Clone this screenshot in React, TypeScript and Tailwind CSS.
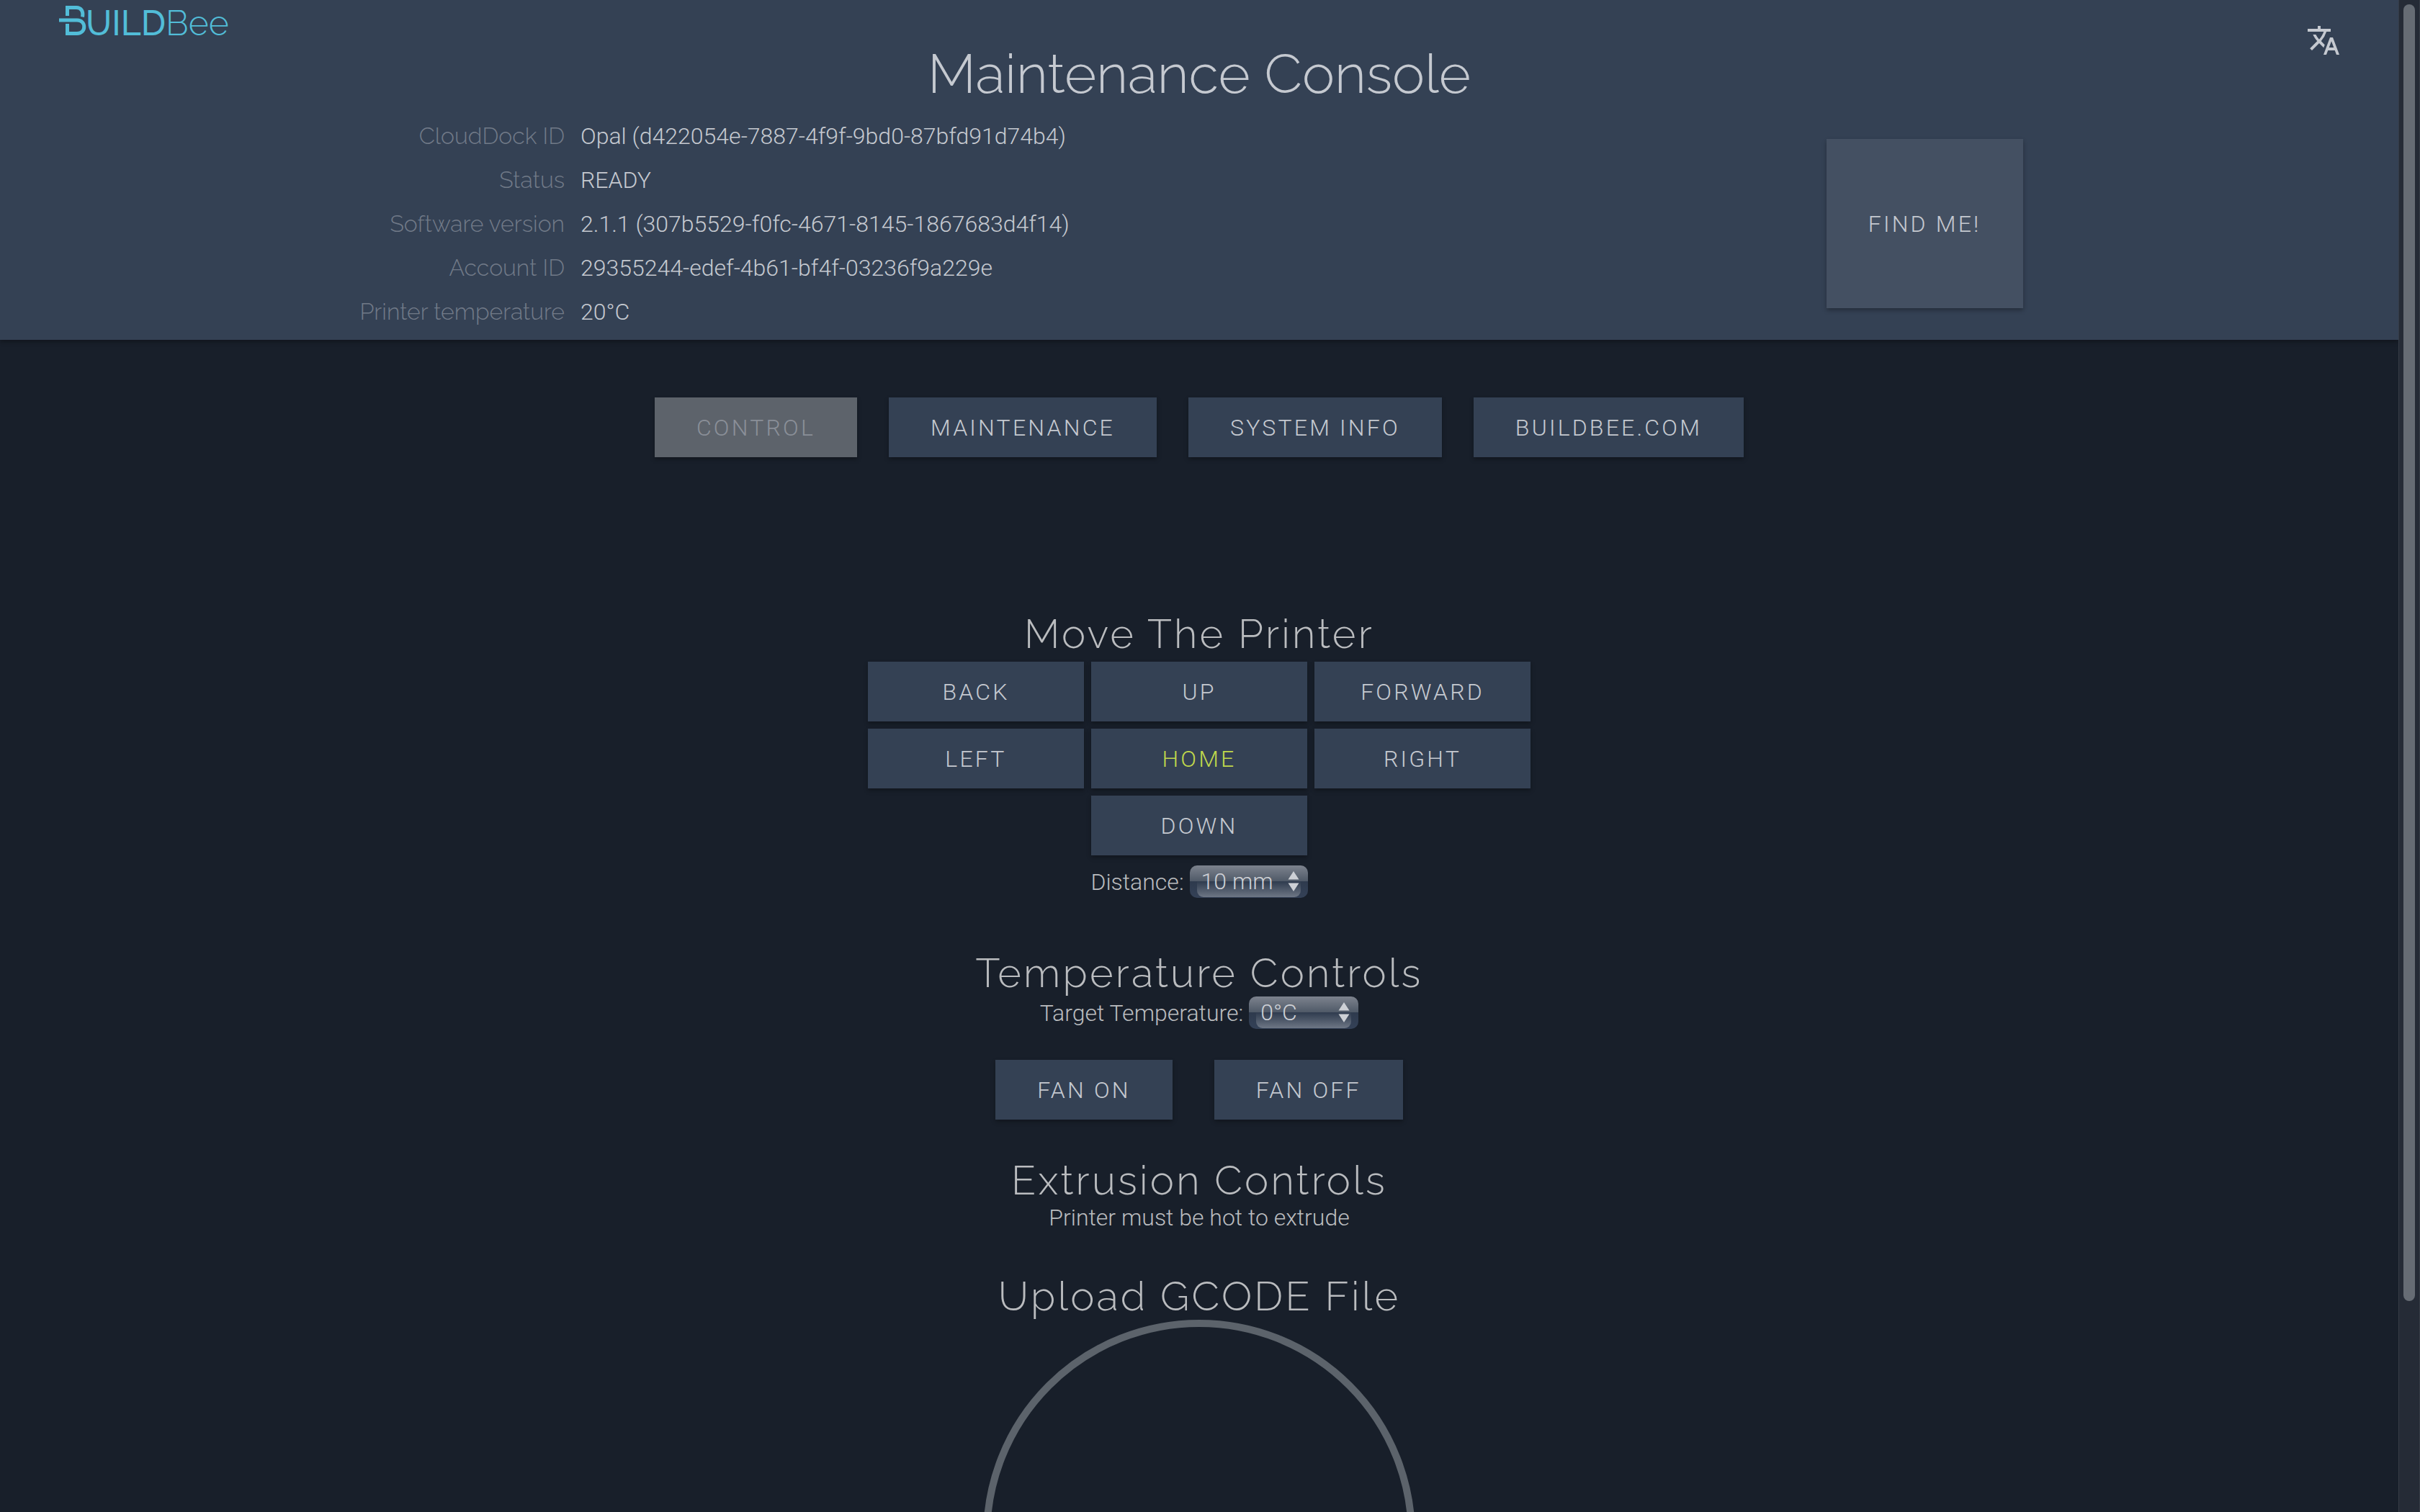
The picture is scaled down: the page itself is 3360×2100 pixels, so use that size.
import type { ReactNode } from "react";
import { MdTranslate } from "react-icons/md";

const raleway = "font-['Raleway',Lato,sans-serif] font-light";

const info = [
  ["CloudDock ID", "Opal (d422054e-7887-4f9f-9bd0-87bfd91d74b4)"],
  ["Status", "READY"],
  ["Software version", "2.1.1 (307b5529-f0fc-4671-8145-1867683d4f14)"],
  ["Account ID", "29355244-edef-4b61-bf4f-03236f9a229e"],
  ["Printer temperature", "20°C"],
];

const buttonBase =
  "text-[32px] font-light uppercase tracking-widest shadow-[0_3px_6px_rgba(0,0,0,0.3)]";

function Button({
  children,
  className = "text-[#c5c9d0]",
  disabled = false,
}: {
  children: ReactNode;
  className?: string;
  disabled?: boolean;
}) {
  return (
    <button
      type="button"
      disabled={disabled}
      className={`${buttonBase} h-[83px] ${disabled ? "bg-[#5d636b]" : "bg-[#344154]"} ${className}`}
    >
      {children}
    </button>
  );
}

function SectionTitle({ children }: { children: ReactNode }) {
  return (
    <h2 className={`${raleway} text-[56px] leading-[66px] tracking-[0.2rem] text-[#babcbf]`}>
      {children}
    </h2>
  );
}

function Picker({
  id,
  label,
  options,
  className,
}: {
  id: string;
  label: string;
  options: string[];
  className: string;
}) {
  return (
    <div className="flex items-center gap-2">
      <label htmlFor={id} className="text-[#babcbf]">
        {label}
      </label>
      <div
        className={`relative h-[45px] overflow-hidden rounded-[10px] bg-[linear-gradient(#7d838e_0%,#505a68_48%,#2e3a4d_49%,#344157_100%)] ${className}`}
      >
        <span className="absolute inset-x-[10px] top-[22px] bottom-px rounded-b-[9px] bg-linear-to-b from-[#2f3b4e] to-[#6e7785]" />
        <select
          id={id}
          className="relative size-full appearance-none bg-transparent pl-[16px] text-[32px] leading-[45px] font-light text-[#cdd0d5]"
        >
          {options.map((option) => (
            <option key={option}>{option}</option>
          ))}
        </select>
        <svg
          viewBox="0 0 16 28"
          className="pointer-events-none absolute top-[8px] right-[12px] h-[28px] w-[16px] fill-[#cdd0d5]"
        >
          <path d="M8 0 15.500 11.500H.5zM8 28 .5 16.500h15z" />
        </svg>
      </div>
    </div>
  );
}

function Logo() {
  return (
    <svg viewBox="0 0 260 66" className="h-[66px] w-[260px]" role="img" aria-label="BuildBee">
      <g fill="none" stroke="#52bdd8" strokeWidth="5">
        <path d="M11.500 22V10.500H24c6.500 0 10 5 8.500 13" />
        <path d="M0 28h25c13 0 13 18.500 0 18.500H11.500V33" />
      </g>
      <g fill="#52bdd8" fontFamily="Raleway, Lato, sans-serif" fontSize="48">
        <text x="37" y="49" fontWeight="500">
          UILD
        </text>
        <text x="148" y="49" fontWeight="300">
          Bee
        </text>
      </g>
    </svg>
  );
}

export default function App() {
  return (
    <div className="flex h-screen overflow-hidden bg-[#181f2a] font-['Roboto',sans-serif] text-[32px] leading-[38px] font-light">
      <div className="min-w-0 flex-1 overflow-hidden">
        <header className="bg-[#344154] pb-[9px] shadow-[0_3px_6px_rgba(0,0,0,0.3)]">
          <div className="grid grid-cols-[1fr_auto_1fr] items-start">
            <a href="#" className="ml-[82px]">
              <Logo />
            </a>
            <h1
              className={`${raleway} mt-[55px] mb-[7px] text-[76px] leading-[96px] text-[#c5c9d0]`}
            >
              Maintenance Console
            </h1>
            <button
              type="button"
              aria-label="Change language"
              className="mt-8 mr-20 justify-self-end text-[#c5c9d0]"
            >
              <MdTranslate size={48} />
            </button>
          </div>
          <div className="mx-auto flex w-[70%] items-center justify-between pr-[22px]">
            <table>
              <tbody>
                {info.map(([label, value]) => (
                  <tr key={label} className="h-[61px] align-middle">
                    <th
                      scope="row"
                      className={`${raleway} p-0 text-right text-[#717a88]`}
                    >
                      {label}
                    </th>
                    <td className="p-0 pl-[22px] text-[#c5c9d0]">{value}</td>
                  </tr>
                ))}
              </tbody>
            </table>
            <button
              type="button"
              className={`${buttonBase} h-[235px] bg-[#445062] px-[58px] text-[#c5c9d0]`}
            >
              Find me!
            </button>
          </div>
        </header>

        <main className="flex flex-col items-center">
          <nav className="mt-20 flex gap-[44px]">
            <Button disabled className="px-[58px] text-[#8a8f98]">
              Control
            </Button>
            <Button className="px-[58px] text-[#c5c9d0]">Maintenance</Button>
            <Button className="px-[58px] text-[#c5c9d0]">System info</Button>
            <Button className="px-[58px] text-[#c5c9d0]">BuildBee.com</Button>
          </nav>

          <section className="mt-[212px] flex flex-col items-center">
            <SectionTitle>Move The Printer</SectionTitle>
            <div className="mt-[6px] mb-[14px] grid grid-cols-[300px_300px_300px] gap-[10px]">
              <Button>Back</Button>
              <Button>Up</Button>
              <Button>Forward</Button>
              <Button>Left</Button>
              <Button className="text-[#c0d84c]">Home</Button>
              <Button>Right</Button>
              <Button className="col-start-2 text-[#c5c9d0]">Down</Button>
            </div>
            <Picker
              id="distance"
              label="Distance:"
              className="w-[164px]"
              options={["10 mm", "1 mm", "50 mm"]}
            />
          </section>

          <section className="mt-[71px] flex flex-col items-center">
            <SectionTitle>Temperature Controls</SectionTitle>
            <Picker
              id="temperature"
              label="Target Temperature:"
              className="w-[152px]"
              options={["0°C", "180°C", "200°C"]}
            />
            <div className="mt-[43px] flex gap-[58px]">
              <Button className="px-[58px] text-[#c5c9d0]">Fan on</Button>
              <Button className="px-[58px] text-[#c5c9d0]">Fan off</Button>
            </div>
          </section>

          <section className="mt-[51px] flex flex-col items-center">
            <SectionTitle>Extrusion Controls</SectionTitle>
            <p className="text-[#babcbf]">Printer must be hot to extrude</p>
          </section>

          <section className="mt-[57px] flex flex-col items-center">
            <SectionTitle>Upload GCODE File</SectionTitle>
            <div className="size-[600px] rounded-full border-[10px] border-[#5c636b]" />
          </section>
        </main>
      </div>

      <div className="flex w-[30px] justify-center border-x border-[#363c46] bg-[#252b36] pt-[6px]">
        <div className="h-[86%] w-4 rounded-full bg-[#666c74]" />
      </div>
    </div>
  );
}
